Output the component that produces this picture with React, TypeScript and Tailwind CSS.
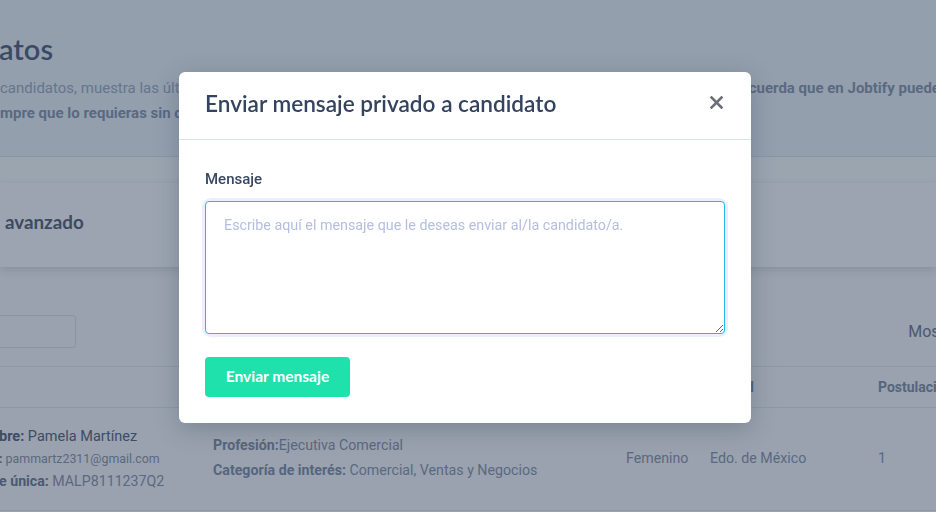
import React from 'react';

const roboto = { fontFamily: 'Roboto, "Liberation Sans", sans-serif' };

const CloseIcon: React.FC = () => (
  <svg width="13" height="13" viewBox="0 0 13 13" fill="none">
    <path d="M1.5 1.5l10 10M11.5 1.5l-10 10" stroke="#6b6f75" strokeWidth="2.6" strokeLinecap="square" />
  </svg>
);

const MessageModal: React.FC = () => {
  return (
    <div className="fixed inset-0 z-50">
      <div className="absolute left-[179px] top-[72px] w-[572px] rounded-[6px] bg-white shadow-[0_6px_24px_rgba(40,50,70,0.25)]">
        <div className="flex h-[68px] items-center justify-between border-b border-[#dde2ea] pl-[26px] pr-[28px]">
          <h3 className="-mt-[3px] font-['Lato',sans-serif] text-[22.6px] font-semibold text-[#34435e]">
            Enviar mensaje privado a candidato
          </h3>
          <button className="-mt-[6px]">
            <CloseIcon />
          </button>
        </div>
        <div className="px-[26px] pb-[26px] pt-[30px]" style={roboto}>
          <label className="block text-[15px] font-medium leading-[18px] text-[#3a4862]">Mensaje</label>
          <div className="mt-[13px] rounded-[6px] ring-[3px] ring-[#ebeefc]">
            <textarea
              className="block h-[133px] w-full rounded-[4px] border border-[#25b9ea] px-[18px] py-[13px] text-[14.3px] text-[#3a4862] outline-none placeholder:text-[#b4bfdf]"
              placeholder="Escribe aquí el mensaje que le deseas enviar al/la candidato/a."
            />
          </div>
          <button className="mt-[23px] h-[40px] w-[145px] rounded-[4px] bg-[#1fe1ab] font-['Lato',sans-serif] text-[15.5px] font-bold text-white">
            Enviar mensaje
          </button>
        </div>
      </div>
    </div>
  );
};

const App: React.FC = () => {
  return (
    <div className="relative h-[512px] w-[936px] overflow-hidden bg-[#99a2ae]" style={roboto}>
      <div className="h-[157px] border-b border-[#8a96a7] bg-[#939fad]">
        <h1 className="-ml-[1px] pt-[31px] font-['Lato',sans-serif] text-[29px] font-semibold leading-[36px] text-[#3b4a64]">
          atos
        </h1>
        <div className="mt-[9px] text-[15px] leading-[25px] text-[#66758c]">
          <div className="flex whitespace-nowrap">
            <span className="w-[731px] shrink-0 overflow-hidden">candidatos, muestra las últimas postulaciones recibidas para tus vacantes.</span>
            <span className="font-bold text-[#5a6982]">Recuerda que en Jobtify puedes</span>
          </div>
          <div className="whitespace-nowrap font-bold text-[#5a6982]">mpre que lo requieras sin costo adicional.</div>
        </div>
      </div>
      <div className="h-[26px] bg-[#9ba5b0]" />
      <div className="flex h-[84px] items-center bg-[#9ba4b0] pb-[5px] pl-[5px] shadow-[0_3px_8px_rgba(60,70,90,0.18)]">
        <span className="font-['Lato',sans-serif] text-[18.8px] font-bold text-[#3d4a61]">avanzado</span>
      </div>
      <div className="mt-[48px] flex items-center justify-between">
        <div className="h-[33px] w-[76px] rounded-r-[4px] border border-l-0 border-[#8894a5]" />
        <span className="mr-[-28px] text-[16px] text-[#4a5870]">Mostrar</span>
      </div>
      <div className="mt-[18px] border-t border-[#8c98aa]">
        <div className="grid h-[41px] grid-cols-[213px_413px_84px_168px_1fr] items-center border-b border-[#8c98aa] text-[14px] font-bold text-[#56657d]">
          <span />
          <span />
          <span>Género</span>
          <span>Ciudad</span>
          <span className="whitespace-nowrap">Postulaciones</span>
        </div>
        <div className="grid h-[103px] grid-cols-[213px_413px_84px_168px_1fr] items-center border-b border-[#8c98aa] text-[14.2px] text-[#5b6980]">
          <div className="-ml-[1px] flex flex-col gap-[2px]">
            <div className="text-[14.5px] text-[#3e4c64]">
              <b className="font-bold">bre:</b> Pamela Martínez
            </div>
            <div className="text-[12.4px] text-[#5b6980]">
              <b className="font-bold text-[#4b5972]">:</b> pammartz2311@gmail.com
            </div>
            <div className="text-[14.2px]">
              <b className="font-bold text-[#4b5972]">e única:</b> MALP8111237Q2
            </div>
          </div>
          <div className="-mt-[2px] flex flex-col gap-[4px]">
            <div>
              <b className="font-bold text-[#56657d]">Profesión:</b>Ejecutiva Comercial
            </div>
            <div>
              <b className="font-bold text-[#56657d]">Categoría de interés:</b> Comercial, Ventas y Negocios
            </div>
          </div>
          <span>Femenino</span>
          <span>Edo. de México</span>
          <span>1</span>
        </div>
      </div>
      <MessageModal />
    </div>
  );
};

export default App;
